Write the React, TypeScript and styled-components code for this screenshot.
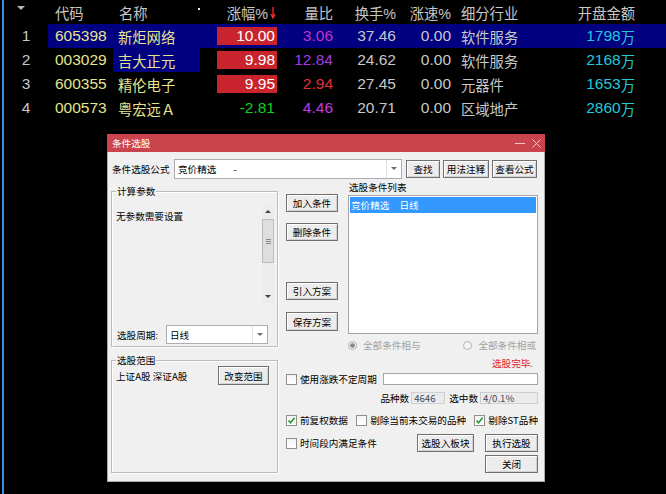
import React from 'react';
import styled, { createGlobalStyle } from 'styled-components';

const GlobalStyle = createGlobalStyle`
  html, body { margin: 0; padding: 0; background: #000; }
  body { width: 666px; height: 494px; overflow: hidden; }
`;

const Screen = styled.div`
  position: relative;
  height: 494px;
  margin-left: 2px;
  border-left: 2px solid #3a8ee8;
  background: #000;
  font-family: 'Liberation Sans', 'Noto Sans CJK SC', sans-serif;
`;

const Grid = styled.div`
  display: grid;
  grid-template-columns: 44px 65px 87px 80px 55px 63px 55px 87px 100px 1fr;
  grid-auto-rows: 24px;
`;

type Align = 'flex-start' | 'flex-end' | 'center' | 'space-between';

const Cell = styled.div<{ $align?: Align; $pad?: string; $color?: string; $sel?: boolean; $cjk?: boolean }>`
  display: flex;
  align-items: center;
  justify-content: ${(p) => p.$align ?? 'flex-start'};
  padding: ${(p) => p.$pad ?? '0'};
  color: ${(p) => p.$color ?? '#c8c8c8'};
  background: ${(p) => (p.$sel ? '#000080' : 'transparent')};
  font-size: ${(p) => (p.$cjk ? '14.3px' : '15.5px')};
  white-space: nowrap;
  overflow: hidden;
`;

const ChgBox = styled.div<{ $boxed: boolean; $color: string }>`
  flex: 1;
  height: 18px;
  display: flex;
  align-items: center;
  justify-content: flex-end;
  padding-right: 2px;
  background: ${(p) => (p.$boxed ? '#c9232d' : 'transparent')};
  color: ${(p) => p.$color};
`;

const SortMark = styled.span`
  align-self: flex-start;
  margin: 6px 10px 0 0;
  width: 0;
  height: 0;
  border-left: 4px solid transparent;
  border-right: 4px solid transparent;
  border-top: 4px solid #b8b8b8;
`;

const Dot = styled.span`
  align-self: flex-start;
  margin-top: 8px;
  width: 2px;
  height: 2px;
  background: #e8e8e8;
`;

const Wan = styled.span`
  font-size: 14.3px;
`;

const cols: { align: Align; pad: string }[] = [
  { align: 'center', pad: '0' },
  { align: 'flex-start', pad: '0 0 0 7px' },
  { align: 'flex-start', pad: '0 0 0 5px' },
  { align: 'flex-start', pad: '0 3px 0 17px' },
  { align: 'flex-end', pad: '0 2px 0 0' },
  { align: 'flex-end', pad: '0 2px 0 0' },
  { align: 'flex-end', pad: '0 2px 0 0' },
  { align: 'flex-start', pad: '0 0 0 8px' },
  { align: 'flex-end', pad: '0 5px 0 0' },
];

const rows = [
  { n: '1', code: '605398', name: '新炬网络', chg: '10.00', up: true, lb: '3.06', lbc: '#c834c8', hs: '37.46', hy: '软件服务', kp: '1798', sel: 'row' },
  { n: '2', code: '003029', name: '吉大正元', chg: '9.98', up: true, lb: '12.84', lbc: '#a23ae4', hs: '24.62', hy: '软件服务', kp: '2168', sel: 'name' },
  { n: '3', code: '600355', name: '精伦电子', chg: '9.95', up: true, lb: '2.94', lbc: '#e0303a', hs: '27.45', hy: '元器件', kp: '1653', sel: '' },
  { n: '4', code: '000573', name: '粤宏远Ａ', chg: '-2.81', up: false, lb: '4.46', lbc: '#c23ce4', hs: '20.71', hy: '区域地产', kp: '2860', sel: '' },
];

const YELLOW = '#e6e48e';

const Quotes = () => (
  <Grid>
    <Cell $align="center">
      <SortMark />
    </Cell>
    <Cell $align={cols[1].align} $pad={cols[1].pad} $cjk>代码</Cell>
    <Cell $align="space-between" $pad="0 0 0 6px" $cjk>
      名称
      <Dot />
    </Cell>
    <Cell $align="flex-end" $pad="0 4px 0 0" $cjk>
      涨幅%
      <svg width="6" height="13" viewBox="0 0 6 13" style={{ marginLeft: 2 }}>
        <path d="M3 1 V12 M0.8 8 L3 12 L5.2 8" stroke="#ff2a2a" strokeWidth="1.3" fill="none" />
      </svg>
    </Cell>
    <Cell $align={cols[4].align} $pad={cols[4].pad} $cjk>量比</Cell>
    <Cell $align={cols[5].align} $pad={cols[5].pad} $cjk>换手%</Cell>
    <Cell $align={cols[6].align} $pad={cols[6].pad} $cjk>涨速%</Cell>
    <Cell $align={cols[7].align} $pad={cols[7].pad} $cjk>细分行业</Cell>
    <Cell $align={cols[8].align} $pad={cols[8].pad} $cjk>开盘金额</Cell>
    <Cell />

    {rows.map((r) => {
      const row = r.sel === 'row';
      return (
        <React.Fragment key={r.n}>
          <Cell $align={cols[0].align} $pad={cols[0].pad}>{r.n}</Cell>
          <Cell $align={cols[1].align} $pad={cols[1].pad} $color={YELLOW} $sel={row}>{r.code}</Cell>
          <Cell $align={cols[2].align} $pad={cols[2].pad} $color={YELLOW} $sel={row || r.sel === 'name'} $cjk>{r.name}</Cell>
          <Cell $align={cols[3].align} $pad={cols[3].pad} $sel={row}>
            <ChgBox $boxed={r.up} $color={r.up ? '#ffffff' : '#10d020'}>{r.chg}</ChgBox>
          </Cell>
          <Cell $align={cols[4].align} $pad={cols[4].pad} $color={r.lbc} $sel={row}>{r.lb}</Cell>
          <Cell $align={cols[5].align} $pad={cols[5].pad} $sel={row}>{r.hs}</Cell>
          <Cell $align={cols[6].align} $pad={cols[6].pad} $sel={row}>0.00</Cell>
          <Cell $align={cols[7].align} $pad={cols[7].pad} $sel={row} $cjk>{r.hy}</Cell>
          <Cell $align={cols[8].align} $pad={cols[8].pad} $color="#22c8da" $sel={row}>
            {r.kp}
            <Wan>万</Wan>
          </Cell>
          <Cell $sel={row} />
        </React.Fragment>
      );
    })}
  </Grid>
);

/* ---------- dialog ---------- */

const Dialog = styled.div`
  position: absolute;
  left: 103px;
  top: 134px;
  width: 438px;
  height: 348px;
  box-sizing: border-box;
  display: flex;
  flex-direction: column;
  background: #f0f0f0;
  border: 1px solid #a9a9a9;
  border-top: none;
  font-family: 'Noto Sans CJK SC', 'Liberation Sans', sans-serif;
  font-size: 9.6px;
  line-height: 12px;
  color: #000;
`;

const TitleBar = styled.div`
  display: flex;
  align-items: center;
  height: 18px;
  margin: 0 -1px;
  padding: 0 4px 0 5px;
  background: #c9444c;
  color: #fff;
`;

const TitleCtl = styled.div`
  display: flex;
  align-items: center;
  gap: 7px;
  margin-left: auto;
`;

const Body = styled.div`
  flex: 1;
  display: flex;
  flex-direction: column;
  padding: 6px 6px 0 3px;
`;

const Row = styled.div<{ $mt?: number; $h?: number; $justify?: Align }>`
  display: flex;
  align-items: center;
  margin-top: ${(p) => p.$mt ?? 0}px;
  height: ${(p) => (p.$h ? `${p.$h}px` : 'auto')};
  justify-content: ${(p) => p.$justify ?? 'flex-start'};
  flex-shrink: 0;
`;

const Label = styled.span<{ $w?: number; $ml?: number; $color?: string }>`
  width: ${(p) => (p.$w ? `${p.$w}px` : 'auto')};
  margin-left: ${(p) => p.$ml ?? 0}px;
  color: ${(p) => p.$color ?? 'inherit'};
  white-space: nowrap;
  flex-shrink: 0;
`;

const Btn = styled.button<{ $w: number; $ml?: number; $h?: number }>`
  width: ${(p) => p.$w}px;
  height: ${(p) => p.$h ?? 18}px;
  margin-left: ${(p) => p.$ml ?? 0}px;
  padding: 0;
  box-sizing: border-box;
  border: 1px solid #707070;
  background: #ececec;
  box-shadow: inset 1px 1px 0 #fff, inset -1px -1px 0 #d2d2d2;
  font: inherit;
  color: #000;
  flex-shrink: 0;
`;

const Combo = styled.div<{ $w: number; $h: number; $ml?: number }>`
  display: flex;
  align-items: stretch;
  width: ${(p) => p.$w}px;
  height: ${(p) => p.$h}px;
  margin-left: ${(p) => p.$ml ?? 0}px;
  box-sizing: border-box;
  border: 1px solid #abadb3;
  background: #fff;
  flex-shrink: 0;
`;

const ComboText = styled.div`
  flex: 1;
  display: flex;
  align-items: center;
  padding-left: 3px;
`;

const ComboDrop = styled.div`
  width: 14px;
  display: flex;
  align-items: center;
  justify-content: center;
  border-left: 1px solid #e3e3e3;
  &::after {
    content: '';
    border-left: 3px solid transparent;
    border-right: 3px solid transparent;
    border-top: 3px solid #6a6a6a;
  }
`;

const Main = styled.div`
  display: flex;
  gap: 8px;
  margin-top: 2px;
`;

const Col = styled.div<{ $w: number; $ml?: number }>`
  display: flex;
  flex-direction: column;
  width: ${(p) => p.$w}px;
  margin-left: ${(p) => p.$ml ?? 0}px;
  flex-shrink: 0;
`;

const Group = styled.div<{ $mt: number; $h: number }>`
  position: relative;
  display: flex;
  flex-direction: column;
  margin-top: ${(p) => p.$mt}px;
  height: ${(p) => p.$h}px;
  box-sizing: border-box;
  border: 1px solid #bcbcbc;
  box-shadow: inset 1px 1px 0 #fff, 1px 1px 0 #fff;
`;

const Legend = styled.span`
  position: absolute;
  top: -7px;
  left: 4px;
  padding: 0 1px;
  background: #f0f0f0;
`;

const ParamArea = styled.div`
  display: flex;
  margin-top: 13px;
  padding: 0 3px 0 4px;
`;

const ParamText = styled.div`
  flex: 1;
  margin-top: 5px;
`;

const Scroll = styled.div`
  display: flex;
  flex-direction: column;
  width: 12px;
  height: 98px;
  background: #ececec;
`;

const ScrollArrow = styled.div<{ $down?: boolean }>`
  height: 13px;
  display: flex;
  align-items: center;
  justify-content: center;
  margin-top: ${(p) => (p.$down ? 'auto' : '0')};
  &::after {
    content: '';
    border-left: 3px solid transparent;
    border-right: 3px solid transparent;
    ${(p) => (p.$down ? 'border-top: 3px solid #404040;' : 'border-bottom: 3px solid #404040;')}
  }
`;

const Thumb = styled.div`
  height: 44px;
  margin: 1px 0 0;
  box-sizing: border-box;
  border: 1px solid #bdbdbd;
  background: #dedede;
  display: flex;
  align-items: center;
  justify-content: center;
  &::after {
    content: '';
    width: 5px;
    height: 5px;
    border-top: 1px solid #8a8a8a;
    border-bottom: 1px solid #8a8a8a;
    box-sizing: border-box;
    background: linear-gradient(#8a8a8a, #8a8a8a) center / 5px 1px no-repeat;
  }
`;

const PeriodRow = styled.div`
  display: flex;
  align-items: center;
  margin-top: auto;
  margin-bottom: 2px;
  padding-left: 5px;
`;

const RangeRow = styled.div`
  display: flex;
  align-items: center;
  justify-content: space-between;
  margin-top: 5px;
  padding: 0 8px 0 4px;
`;

const ButtonStack = styled.div<{ $mt: number; $gap: number }>`
  display: flex;
  flex-direction: column;
  gap: ${(p) => p.$gap}px;
  margin-top: ${(p) => p.$mt}px;
`;

const ListBox = styled.div`
  height: 139px;
  margin-top: 2px;
  box-sizing: border-box;
  border: 1px solid #a5a5a5;
  background: #fff;
  padding: 1px;
`;

const ListItem = styled.div<{ $on?: boolean }>`
  height: 16px;
  line-height: 16px;
  padding-left: 1px;
  background: ${(p) => (p.$on ? '#3399ff' : 'transparent')};
  color: ${(p) => (p.$on ? '#fff' : '#000')};
`;

const RadioRow = styled.div`
  display: flex;
  justify-content: space-between;
  height: 12px;
  margin-top: 5px;
  padding: 0 2px 0 62px;
  color: #a3a3a3;
`;

const Radio = styled.span<{ $on?: boolean }>`
  display: inline-flex;
  align-items: center;
  gap: 6px;
  &::before {
    content: '';
    width: 9px;
    height: 9px;
    box-sizing: border-box;
    border-radius: 50%;
    border: 1px solid #b0b0b0;
    background: ${(p) => (p.$on ? 'radial-gradient(circle, #8a8a8a 0 2px, #f4f4f4 2.5px)' : '#f4f4f4')};
  }
`;

const Status = styled.div`
  height: 12px;
  margin-top: 6px;
  padding-right: 5px;
  text-align: right;
  color: #e3202c;
`;

const Field = styled.div<{ $w?: number; $ro?: boolean; $ml?: number }>`
  width: ${(p) => (p.$w ? `${p.$w}px` : 'auto')};
  flex: ${(p) => (p.$w ? '0 0 auto' : '1')};
  height: 12px;
  margin-left: ${(p) => p.$ml ?? 0}px;
  box-sizing: border-box;
  border: 1px solid ${(p) => (p.$ro ? '#cfcfcf' : '#a5a5a5')};
  background: ${(p) => (p.$ro ? '#ebebeb' : '#fff')};
  color: #404858;
  line-height: 10px;
  padding-left: 2px;
`;

const CheckItem = styled.span`
  display: inline-flex;
  align-items: center;
  gap: 3px;
  white-space: nowrap;
`;

const Box = styled.span`
  width: 11px;
  height: 11px;
  box-sizing: border-box;
  border: 1px solid #8e8f8f;
  background: linear-gradient(#f4f4f4, #ffffff);
  display: inline-flex;
  align-items: center;
  justify-content: center;
`;

const Check = ({ on, children }: { on?: boolean; children: React.ReactNode }) => (
  <CheckItem>
    <Box>
      {on && (
        <svg width="9" height="9" viewBox="0 0 9 9">
          <path d="M1.5 4.5 L3.5 6.8 L7.6 1.8" stroke="#1d9a2a" strokeWidth="1.5" fill="none" />
        </svg>
      )}
    </Box>
    {children}
  </CheckItem>
);

const StockPicker = () => (
  <Dialog>
    <TitleBar>
      条件选股
      <TitleCtl>
        <svg width="10" height="10" viewBox="0 0 10 10">
          <path d="M0 5.5 H10" stroke="#f2c6c9" strokeWidth="1" />
        </svg>
        <svg width="9" height="9" viewBox="0 0 9 9">
          <path d="M0.5 0.5 L8.5 8.5 M8.5 0.5 L0.5 8.5" stroke="#f2c6c9" strokeWidth="1" />
        </svg>
      </TitleCtl>
    </TitleBar>
    <Body>
      <Row $h={21}>
        <Label $w={62} $ml={1}>条件选股公式</Label>
        <Combo $w={228} $h={20}>
          <ComboText>
            竞价精选<Label $ml={17}>-</Label>
          </ComboText>
          <ComboDrop />
        </Combo>
        <Btn $w={34} $ml={4}>查找</Btn>
        <Btn $w={46} $ml={3}>用法注释</Btn>
        <Btn $w={45} $ml={3}>查看公式</Btn>
      </Row>

      <Main>
        <Col $w={167}>
          <Group $mt={10} $h={156}>
            <Legend>计算参数</Legend>
            <ParamArea>
              <ParamText>无参数需要设置</ParamText>
              <Scroll>
                <ScrollArrow />
                <Thumb />
                <ScrollArrow $down />
              </Scroll>
            </ParamArea>
            <PeriodRow>
              <Label $w={43}>选股周期:</Label>
              <Combo $w={102} $h={19} $ml={6}>
                <ComboText>日线</ComboText>
                <ComboDrop />
              </Combo>
            </PeriodRow>
          </Group>
          <Group $mt={13} $h={113}>
            <Legend>选股范围</Legend>
            <RangeRow>
              <span>上证A股 深证A股</span>
              <Btn $w={51} $h={19}>改变范围</Btn>
            </RangeRow>
          </Group>
        </Col>

        <Col $w={252}>
          <Row $h={153}>
            <Col $w={52} style={{ alignSelf: 'stretch' }}>
              <ButtonStack $mt={13} $gap={11}>
                <Btn $w={52}>加入条件</Btn>
                <Btn $w={52}>删除条件</Btn>
              </ButtonStack>
              <ButtonStack $mt={41} $gap={12}>
                <Btn $w={52}>引入方案</Btn>
                <Btn $w={52} $h={19}>保存方案</Btn>
              </ButtonStack>
            </Col>
            <Col $w={190} $ml={10} style={{ alignSelf: 'stretch' }}>
              <Label $ml={1}>选股条件列表</Label>
              <ListBox>
                <ListItem $on>
                  竞价精选<Label $ml={10}>日线</Label>
                </ListItem>
              </ListBox>
            </Col>
          </Row>

          <RadioRow>
            <Radio $on>全部条件相与</Radio>
            <Radio>全部条件相或</Radio>
          </RadioRow>

          <Status>选股完毕.</Status>

          <Row $mt={4} $h={12}>
            <Check>使用涨跌不定周期</Check>
            <Field $w={155} $ml={5} style={{ marginLeft: 'auto' }} />
          </Row>

          <Row $mt={7} $h={12} $justify="flex-end">
            <Label>品种数</Label>
            <Field $w={34} $ml={2} $ro>4646</Field>
            <Label $ml={4}>选中数</Label>
            <Field $w={58} $ml={2} $ro>4/0.1%</Field>
          </Row>

          <Row $mt={10} $h={12} $justify="space-between">
            <Check on>前复权数据</Check>
            <Check>剔除当前未交易的品种</Check>
            <Check on>剔除ST品种</Check>
          </Row>

          <Row $mt={8} $h={18}>
            <Check>时间段内满足条件</Check>
            <Btn $w={57} style={{ marginLeft: 'auto' }}>选股入板块</Btn>
            <Btn $w={53} $ml={11}>执行选股</Btn>
          </Row>

          <Row $mt={3} $h={18} $justify="flex-end">
            <Btn $w={53}>关闭</Btn>
          </Row>
        </Col>
      </Main>
    </Body>
  </Dialog>
);

const App = () => (
  <>
    <GlobalStyle />
    <Screen>
      <Quotes />
      <StockPicker />
    </Screen>
  </>
);

export default App;
